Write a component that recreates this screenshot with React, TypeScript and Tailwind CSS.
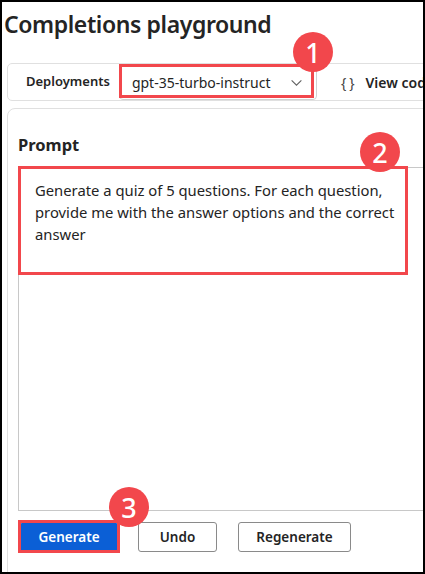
import React from 'react';

const Badge: React.FC<{ n: string; className: string }> = ({ n, className }) => (
  <div
    className={`absolute w-10 h-10 rounded-full bg-[#f2474c] text-white flex items-center justify-center text-[27px] font-medium leading-none ${className}`}
  >
    {n}
  </div>
);

const App: React.FC = () => {
  return (
    <div
      className="relative w-[425px] h-[574px] overflow-hidden bg-white border-2 border-black text-[#242424]"
      style={{ fontFamily: '"Noto Sans", "Open Sans", sans-serif' }}
    >
      <div className="pl-[5px]">
        {/* Title */}
        <h1 className="-ml-[3px] mt-[4px] h-[57px] text-[23px] font-semibold leading-[36px] tracking-[-0.4px]">
          Completions playground
        </h1>

        {/* Toolbar */}
        <div className="flex items-center w-[440px] h-[38px] border border-[#e0e0e0] rounded-[5px]">
          <span className="pl-[18px] pr-[9px] text-[13px] font-semibold">Deployments</span>
          <div className="flex items-center justify-between w-[198px] h-[35px] border border-[#d1d1d1] rounded-[4px] pl-[12px] pr-[13px]">
            <span className="text-[14px]">gpt-35-turbo-instruct</span>
            <svg width="13" height="13" viewBox="0 0 12 12" fill="none" stroke="#616161" strokeWidth="1">
              <path d="M1.5 4 L6 8.5 L10.5 4" />
            </svg>
          </div>
          <div className="flex items-center gap-[8px] pl-[24px]">
            <span className="text-[14px] text-[#424242] tracking-[3px]">{'{}'}</span>
            <span className="text-[14px] font-semibold whitespace-nowrap">View code</span>
          </div>
        </div>

        {/* Prompt panel */}
        <div className="mt-[7px] w-[440px] h-[480px] border border-[#e0e0e0] rounded-[8px] pl-[10px] pt-[25px]">
          <div className="text-[16.5px] font-bold leading-[22px]">Prompt</div>
          <div className="mt-[11px] w-[420px] h-[344px] border border-[#c8c8c8] pl-[16px] pr-[40px] pt-[11px] text-[14.8px] leading-[22px]">
            Generate a quiz of 5 questions. For each question, provide me with the answer options and the correct answer
          </div>
          <div className="flex items-center mt-[11px] pl-[2px] text-[13.5px] font-semibold">
            <button className="w-[98px] h-[28px] bg-[#0b5fd6] text-white rounded-[2px]">Generate</button>
            <button className="ml-[20px] w-[79px] h-[30px] border border-[#8a8a8a] rounded-[3px]">Undo</button>
            <button className="ml-[21px] w-[113px] h-[30px] border border-[#8a8a8a] rounded-[3px]">Regenerate</button>
          </div>
        </div>
      </div>

      {/* Annotations */}
      <div className="absolute left-[117px] top-[62px] w-[195px] h-[34px] border-[3px] border-[#f2474c]" />
      <div className="absolute left-[16px] top-[164px] w-[390px] h-[109px] border-[3px] border-[#f2474c]" />
      <div className="absolute left-[16px] top-[518px] w-[102px] h-[33px] border-[3px] border-[#f2474c]" />
      <Badge n="1" className="left-[291px] top-[30px]" />
      <Badge n="2" className="left-[358px] top-[130px]" />
      <Badge n="3" className="left-[107px] top-[485px]" />
    </div>
  );
};

export default App;
